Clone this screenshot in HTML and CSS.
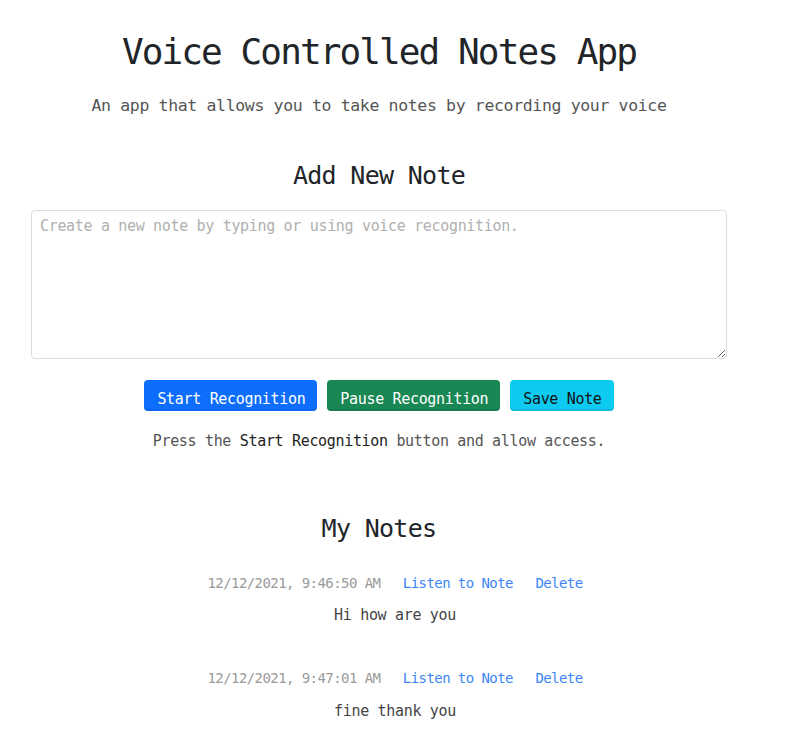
FILE: index.html
```html
<!DOCTYPE html>
<html lang="en">
<head>
<meta charset="utf-8">
<title>Voice Controlled Notes App</title>
<link rel="stylesheet" href="styles.css">
</head>
<body>
<div class="container">
  <h1 class="title">Voice Controlled Notes App</h1>
  <p class="lead">An app that allows you to take notes by recording your voice</p>
  <h3 class="section-title add-title">Add New Note</h3>
  <textarea class="note-input" placeholder="Create a new note by typing or using voice recognition."></textarea>
  <div class="actions">
    <button class="btn btn-primary">Start Recognition</button>
    <button class="btn btn-success">Pause Recognition</button>
    <button class="btn btn-info">Save Note</button>
  </div>
  <p class="hint">Press the <strong>Start Recognition</strong> button and allow access.</p>
  <h3 class="section-title notes-title">My Notes</h3>
  <ul class="notes">
    <li class="note">
      <div class="meta">
        <span class="date">12/12/2021, 9:46:50 AM</span>
        <a href="#" class="link">Listen to Note</a>
        <a href="#" class="link">Delete</a>
      </div>
      <p class="note-text">Hi how are you</p>
    </li>
    <li class="note">
      <div class="meta">
        <span class="date">12/12/2021, 9:47:01 AM</span>
        <a href="#" class="link">Listen to Note</a>
        <a href="#" class="link">Delete</a>
      </div>
      <p class="note-text">fine thank you</p>
    </li>
  </ul>
</div>
</body>
</html>
```
FILE: styles.css
```css
* { box-sizing: border-box; }
html, body { margin: 0; padding: 0; background: #fff; }
body {
  font-family: "DejaVu Sans Mono", monospace;
  color: #212529;
  font-size: 15px;
  letter-spacing: -0.33px;
}
.container {
  width: 696px;
  margin-left: 31px;
  padding-top: 30px;
  text-align: center;
}
.title {
  margin: 0;
  font-size: 36px;
  line-height: 44px;
  font-weight: normal;
  letter-spacing: -1.9px;
  color: #212529;
}
.lead {
  margin: 20px 0 0;
  font-size: 16.5px;
  line-height: 24px;
  letter-spacing: -0.35px;
  color: #555;
}
.section-title {
  margin: 0;
  font-size: 25px;
  line-height: 32px;
  font-weight: normal;
  letter-spacing: -0.7px;
  color: #212529;
}
.add-title { margin-top: 42px; }
.notes-title { margin-top: 61px; }
.note-input {
  display: block;
  width: 100%;
  height: 149px;
  margin-top: 18px;
  padding: 4px 8px;
  border: 1px solid #dcdcdc;
  border-radius: 4px;
  font-family: "DejaVu Sans Mono", monospace;
  font-size: 15px;
  line-height: 22px;
  letter-spacing: -0.33px;
  color: #212529;
  resize: vertical;
}
.note-input::placeholder { color: #b0b0b0; }
.actions {
  display: flex;
  justify-content: center;
  gap: 10px;
  margin-top: 21px;
}
.btn {
  height: 31px;
  padding: 8px 12px 1px 13px;
  border: 0;
  border-radius: 4px;
  font-family: "DejaVu Sans Mono", monospace;
  font-size: 15px;
  line-height: 22px;
  letter-spacing: -0.33px;
  box-shadow: inset 0 -2px 0 rgba(0, 0, 0, 0.08);
}
.btn-primary { background: #0d6efd; color: #fff; }
.btn-success { background: #198754; color: #fff; }
.btn-info { background: #0dcaf0; color: #111; }
.hint {
  margin: 19px 0 0;
  line-height: 22px;
  color: #555;
}
.hint strong { color: #222; font-weight: normal; }
.notes {
  list-style: none;
  margin: 28px 0 0;
  padding: 0 0 0 32px;
}
.note + .note { margin-top: 42px; }
.meta {
  display: flex;
  justify-content: center;
  gap: 22.5px;
  font-size: 14px;
  line-height: 20px;
  letter-spacing: -0.57px;
}
.date { color: #9a9a9a; }
.link { color: #3b86f7; text-decoration: none; }
.note-text {
  margin: 11px 0 0;
  line-height: 22px;
  color: #444;
}
.note + .note .note-text { margin-top: 12px; }
```
